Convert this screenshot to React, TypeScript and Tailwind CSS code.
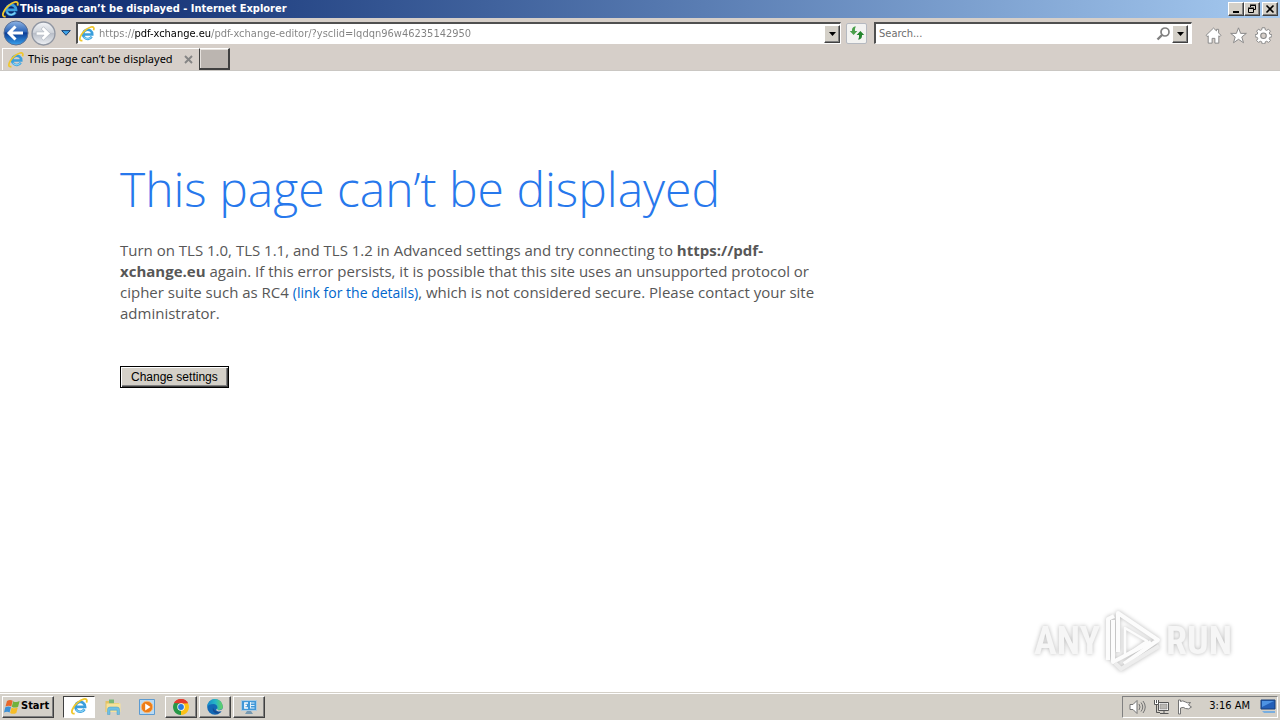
import React from "react";

const raised =
  "border border-t-white border-l-white border-r-[#404040] border-b-[#404040] bg-[#d4d0c8] shadow-[inset_-1px_-1px_0_#808080]";

function IeLogo({ className }: { className: string }) {
  return (
    <svg viewBox="0 0 16 16" className={className} aria-hidden="true">
      <path d="M12.700 10.600a4.600 4.600 0 1 1 .6-2.200H4.600" fill="none" stroke="#3a9edc" strokeWidth="2.500" />
      <path d="M12.300 11a4.600 4.600 0 0 1-7.600-.2" fill="none" stroke="#86d5f7" strokeWidth="1.100" />
      <path
        d="M3.400 14.400C.4 15.600.2 12.600 2 9.400 4 5.600 8.500 1.800 12 1c2.900-.6 3.400 1.100 2.500 3.300"
        fill="none"
        stroke="#efc62c"
        strokeWidth="1.700"
      />
    </svg>
  );
}

function ArrowDown() {
  return (
    <svg viewBox="0 0 7 4" className="h-1 w-[7px]" aria-hidden="true">
      <path d="M0 0h7L3.500 4z" fill="#000" />
    </svg>
  );
}

function TitleBar() {
  return (
    <header className="flex h-[18px] items-center bg-linear-to-r from-[#0a246a] to-[#a6caf0] pr-0.5 pl-0.5">
      <IeLogo className="size-[17px]" />
      <h2 className="ml-px flex-1 font-['DejaVu_Sans_Condensed','DejaVu_Sans',sans-serif] text-[11px] leading-4 font-bold text-white">
        This page can’t be displayed - Internet Explorer
      </h2>
      <button aria-label="Minimize" className={`flex h-3.5 w-4 items-center justify-center ${raised}`}>
        <svg viewBox="0 0 12 10" className="h-2.5 w-3" aria-hidden="true">
          <path d="M3 7h6v2H3z" />
        </svg>
      </button>
      <button aria-label="Restore" className={`flex h-3.5 w-4 items-center justify-center ${raised}`}>
        <svg viewBox="0 0 12 10" className="h-2.5 w-3" aria-hidden="true">
          <path d="M4.500 3V1.500h5v4H8M4 1h6" fill="none" stroke="#000" />
          <path d="M2.500 4.500h5v4h-5zM2 4h6" fill="none" stroke="#000" />
        </svg>
      </button>
      <button aria-label="Close" className={`ml-0.5 flex h-3.5 w-4 items-center justify-center ${raised}`}>
        <svg viewBox="0 0 12 10" className="h-2.5 w-3" aria-hidden="true">
          <path d="M2.500 1.500l7 7m0-7l-7 7" stroke="#000" strokeWidth="1.600" />
        </svg>
      </button>
    </header>
  );
}

function NavRow() {
  return (
    <nav className="flex h-[30px] items-center pr-2 pl-[3px]">
      <button aria-label="Back" className="size-[26px]">
        <svg viewBox="0 0 26 26" className="size-[26px]" aria-hidden="true">
          <defs>
            <linearGradient id="back" x2="0" y2="1">
              <stop offset="0" stopColor="#8fb4e4" />
              <stop offset=".45" stopColor="#2b64b8" />
              <stop offset=".5" stopColor="#0b3b94" />
              <stop offset="1" stopColor="#39a2ee" />
            </linearGradient>
          </defs>
          <circle cx="13" cy="13" r="12" fill="url(#back)" stroke="#5a6f94" />
          <path d="M12.500 6.500L6 13l6.500 6.500M6.500 13H20" fill="none" stroke="#fff" strokeWidth="3" />
        </svg>
      </button>
      <button aria-label="Forward" className="ml-0.5 size-[25px]">
        <svg viewBox="0 0 24 24" className="size-[25px]" aria-hidden="true">
          <defs>
            <linearGradient id="forward" x2="0" y2="1">
              <stop offset="0" stopColor="#f4f6f9" />
              <stop offset=".45" stopColor="#cfd3da" />
              <stop offset=".5" stopColor="#b9bec8" />
              <stop offset="1" stopColor="#eef1f5" />
            </linearGradient>
          </defs>
          <circle cx="12" cy="12" r="11" fill="url(#forward)" stroke="#9096a2" strokeWidth="1.300" />
          <path
            d="M12 5.500L18.500 12 12 18.500l-2.200-2.200 2.700-2.700H5v-3.200h7.500L9.800 7.700z"
            fill="#fff"
            stroke="#aeb4be"
            strokeWidth=".7"
          />
        </svg>
      </button>
      <button aria-label="Recent pages" className="ml-1 flex h-5 w-3 items-center justify-center">
        <svg viewBox="0 0 10 6" className="h-1.5 w-2.5" aria-hidden="true">
          <path d="M.7.600h8.600L5 5.300z" fill="#3fa4e8" stroke="#173f72" />
        </svg>
      </button>
      <div className="ml-1 flex h-[22px] flex-1 items-center border-t-2 border-r border-b border-l-2 border-t-[#505050] border-r-white border-b-white border-l-[#505050] bg-white">
        <IeLogo className="ml-px size-4" />
        <input
          aria-label="Address"
          defaultValue="https://pdf-xchange.eu/pdf-xchange-editor/?ysclid=lqdqn96w46235142950"
          className="ml-1 h-[18px] min-w-0 flex-1 bg-[linear-gradient(90deg,#808080_36px,#000_36px,#000_112px,#808080_112px)] bg-clip-text font-['DejaVu_Sans_Condensed','DejaVu_Sans',sans-serif] text-[11px] text-transparent outline-none"
        />
        <button aria-label="Show address list" className={`flex h-[18px] w-4 items-center justify-center ${raised}`}>
          <ArrowDown />
        </button>
      </div>
      <button
        aria-label="Refresh"
        className="ml-[5px] flex size-[21px] items-center justify-center rounded-xs border border-[#b5b9c0] bg-[#f3f3f1]"
      >
        <svg viewBox="0 0 16 14" className="h-3.5 w-4" aria-hidden="true">
          <path d="M7 .5C3.800.500 3 2.200 3 5H.8L4.600 9l3.800-4H6C5.800 3 6 1.700 7 .5z" fill="#4aa04a" />
          <path d="M9 13.500c3.200 0 4-1.700 4-4.500h2.200l-3.800-4-3.800 4H10c.2 2 0 3.300-1 4.500z" fill="#23852c" />
        </svg>
      </button>
      <div className="ml-[7px] flex h-[22px] w-[318px] items-center border-t-2 border-r border-b border-l-2 border-t-[#505050] border-r-white border-b-white border-l-[#505050] bg-white pr-[3px]">
        <input
          aria-label="Search"
          placeholder="Search..."
          className="ml-[3px] h-[18px] min-w-0 flex-1 font-['DejaVu_Sans_Condensed','DejaVu_Sans',sans-serif] text-[11px] placeholder-[#6d6d6d] outline-none"
        />
        <button aria-label="Start search" className="mr-px">
          <svg viewBox="0 0 15 14" className="h-3.5 w-[15px]" aria-hidden="true">
            <circle cx="9" cy="5" r="4" fill="none" stroke="#808080" strokeWidth="1.700" />
            <path d="M6 8l-4.500 4.500" stroke="#808080" strokeWidth="2.400" />
          </svg>
        </button>
        <button aria-label="Search options" className={`flex h-[18px] w-4 items-center justify-center ${raised}`}>
          <ArrowDown />
        </button>
      </div>
      <div className="ml-[13px] flex items-center gap-2 pt-1">
        <button aria-label="Home">
          <svg viewBox="0 0 16 16" className="size-[17px]" aria-hidden="true">
            <path
              d="M8 1L1 7.800l1 1.200 1-.7v6.900h3.700v-4.500h2.600v4.500H13V8.300l1 .7 1-1.200-2.200-2.200V2.200h-2v1.500z"
              fill="#fff"
              stroke="#858585"
              strokeWidth=".9"
            />
          </svg>
        </button>
        <button aria-label="Favorites">
          <svg viewBox="0 0 16 16" className="size-[17px]" aria-hidden="true">
            <path
              d="M8 .8l2 5.200h5.400l-4.300 3.400 1.600 5.400L8 11.600l-4.700 3.200 1.600-5.400L.6 6H6z"
              fill="#fff"
              stroke="#858585"
              strokeWidth=".9"
            />
          </svg>
        </button>
        <button aria-label="Tools">
          <svg viewBox="0 0 16 16" className="size-[17px]" aria-hidden="true">
            <path
              d="M6.700.700h2.600l.4 2 1.300.5 1.700-1.100 1.800 1.800-1.100 1.700.5 1.200 1.900.4v2.100l-1.900.4-.5 1.300 1.100 1.700-1.800 1.800-1.700-1.100-1.300.5-.4 1.900H6.700l-.4-1.900-1.300-.5-1.700 1.100-1.800-1.800 1.100-1.700-.5-1.300-1.900-.4V7.200l1.900-.4.5-1.200-1.100-1.700 1.800-1.800L5 3.200l1.300-.5z"
              fill="#fff"
              stroke="#858585"
              strokeWidth=".9"
            />
            <circle cx="8" cy="8.200" r="2.600" fill="#d6cfc9" stroke="#858585" />
          </svg>
        </button>
      </div>
    </nav>
  );
}

function TabRow() {
  return (
    <div className="flex h-[23px] border-b border-[#cac7c3]">
      <div className="ml-0.5 flex w-[197px] items-center border-t border-l border-white pr-1.5 pl-[5px]">
        <IeLogo className="size-4" />
        <span className="ml-1 flex-1 font-['Noto_Sans','DejaVu_Sans_Condensed',sans-serif] text-[11px] whitespace-nowrap">
          This page can’t be displayed
        </span>
        <button aria-label="Close tab">
          <svg viewBox="0 0 9 9" className="size-[9px]" aria-hidden="true">
            <path d="M1 1l7 7m0-7L1 8" stroke="#858585" strokeWidth="1.900" />
          </svg>
        </button>
      </div>
      <button
        aria-label="New tab"
        className="h-[22px] w-[31px] border border-t-white border-r-2 border-b-2 border-[#404040] bg-[#bbb5b0] shadow-[inset_1px_1px_0_#e6e2de]"
      />
    </div>
  );
}

function Watermark() {
  return (
    <div className="flex items-center gap-1 self-end pr-12 pb-[18px] font-['Liberation_Sans_Narrow','Roboto_Condensed','DejaVu_Sans_Condensed',sans-serif] text-[38px] leading-[66px] font-bold text-[#f6f6f6] drop-shadow-[0_0_2px_#b8b8b8]">
      <span>ANY</span>
      <svg viewBox="0 0 58 66" className="h-[66px] w-[58px]" aria-hidden="true">
        <g fill="none" stroke="#fcfcfc" strokeWidth="4" strokeLinejoin="round">
          <path d="M14 44V5l40 27L20 56" />
          <path d="M21 48V20l22 13-22 15" strokeWidth="2.500" />
          <path d="M4 52V11l6-3M9 12v42l38-20" />
          <path d="M11 55l6 6 38-23" stroke="#ededed" />
        </g>
      </svg>
      <span>RUN</span>
    </div>
  );
}

function ErrorPage() {
  return (
    <main className="flex flex-1 flex-col justify-between bg-white font-['Open_Sans','Noto_Sans',sans-serif]">
      <div className="px-[120px] pt-[84px]">
        <h1 className="text-5xl leading-[68px] font-light text-[#2778ec]">This page can’t be displayed</h1>
        <p className="mt-[17px] max-w-[705px] text-[15px] leading-[21px] text-[#575757]">
          Turn on TLS 1.0, TLS 1.1, and TLS 1.2 in Advanced settings and try connecting to{" "}
          <b className="font-bold">https://pdf-xchange.eu</b> again. If this error persists, it is possible that this
          site uses an unsupported protocol or cipher suite such as RC4{" "}
          <a href="#details" className="text-sm leading-[21px] text-[#0066cc]">
            (link for the details)
          </a>
          , which is not considered secure. Please contact your site administrator.
        </p>
        <button className="mt-[42px] h-[22px] border border-black bg-[#d4d0c8] px-2.5 font-['Liberation_Sans',sans-serif] text-xs leading-5 text-black shadow-[inset_1px_1px_0_#fff,inset_-1px_-1px_0_#404040,inset_-2px_-2px_0_#808080]">
          Change settings
        </button>
      </div>
      <Watermark />
    </main>
  );
}

const task = "flex h-[22px] w-8 items-center justify-center";

function Taskbar() {
  return (
    <footer className="flex h-[28px] items-center border-t border-[#d4d0c8] bg-[#d4d0c8] pr-0.5 shadow-[inset_0_1px_0_#fff]">
      <button
        className={`ml-0.5 flex h-[22px] w-[52px] items-center gap-px pl-px font-['DejaVu_Sans_Condensed','DejaVu_Sans',sans-serif] text-[11px] font-bold ${raised}`}
      >
        <svg viewBox="0 0 16 16" className="size-4 shrink-0" aria-hidden="true">
          <path d="M3 2Q6 .1 8.700 1.800L7.300 7.400Q4.700 6 1.500 7.600z" fill="#e8682b" />
          <path d="M9.200 2.200Q12 4 15.600 2l-1.500 5.700Q10.800 9.400 7.800 7.700z" fill="#72b23c" />
          <path d="M1.300 8.300Q4.300 6.800 7 8.100L5.600 13.500Q3.200 12 0 13.600z" fill="#3d91d6" />
          <path d="M7.600 8.400q3 1.700 6.200.100L12.300 14Q9 15.700 6.100 14z" fill="#f6bd27" />
        </svg>
        Start
      </button>
      <button
        aria-label="Internet Explorer"
        className="ml-[9px] flex h-[22px] w-8 items-center justify-center border border-t-[#404040] border-r-white border-b-white border-l-[#404040] bg-white"
      >
        <IeLogo className="size-[17px]" />
      </button>
      <button aria-label="File Explorer" className={`ml-0.5 ${task}`}>
        <svg viewBox="0 0 18 18" className="size-[18px]" aria-hidden="true">
          <path d="M1.500 3h5l1 2H15v9H1.500z" fill="#e3c263" />
          <path d="M5 1.500h5v4H5z" fill="#79b878" />
          <path d="M2.500 5.500h14V14h-14z" fill="#f6e29a" />
          <path d="M3.500 16.500v-5q0-2.500 2.500-2.500h7q2.500 0 2.500 2.500v5H13v-4.300H6v4.300z" fill="#6ec0e4" stroke="#4f9dc4" strokeWidth=".5" />
        </svg>
      </button>
      <button aria-label="Media Player" className={`ml-0.5 ${task}`}>
        <svg viewBox="0 0 16 16" className="size-4" aria-hidden="true">
          <path d="M.5.500h15v15H.5z" fill="#b9daf3" stroke="#5c9bd1" />
          <circle cx="8" cy="8" r="5.800" fill="#ed7d17" stroke="#f7b977" />
          <path d="M6.200 4.500L11.500 8l-5.300 3.500z" fill="#fff" />
        </svg>
      </button>
      <button aria-label="Chrome" className={`ml-0.5 ${task} ${raised}`}>
        <svg viewBox="0 0 16 16" className="size-4" aria-hidden="true">
          <path d="M8 8L1.100 4A8 8 0 0 1 14.900 4z" fill="#e33b2e" />
          <path d="M8 8l6.900-4A8 8 0 0 1 8 16z" fill="#fbc116" />
          <path d="M8 8v8A8 8 0 0 1 1.100 4z" fill="#279847" />
          <path d="M8 4.300h7l-3.800 5.500z" fill="#fbc116" />
          <path d="M4.800 10L1.100 4 8 4.300z" fill="#279847" />
          <path d="M1.100 4L8 4.300h7A8 8 0 0 0 1.100 4z" fill="#e33b2e" />
          <circle cx="8" cy="8" r="3.700" fill="#fff" />
          <circle cx="8" cy="8" r="2.900" fill="#287be0" />
        </svg>
      </button>
      <button aria-label="Edge" className={`ml-0.5 ${task} ${raised}`}>
        <svg viewBox="0 0 16 16" className="size-4" aria-hidden="true">
          <defs>
            <linearGradient id="edge" x2="1" y2="0">
              <stop offset="0" stopColor="#168acd" />
              <stop offset=".55" stopColor="#28b8c4" />
              <stop offset="1" stopColor="#67d35b" />
            </linearGradient>
          </defs>
          <circle cx="8" cy="8" r="7.800" fill="#1268b5" />
          <path
            d="M.2 8A7.800 7.800 0 0 1 15.800 7.500c.2 2.600-2 3.700-4.300 3.500-1.700-.1-2-.8-1.200-1.700C10.900 7 9 5 6.500 5 3.500 5 1 6 .2 8z"
            fill="url(#edge)"
          />
          <path d="M9.800 9.800C8 12 11.500 13.500 15 12l1 .5V9.500c-1.200 1.500-3.300 2-5 1.500z" fill="#d4d0c8" />
          <path d="M6 8.500c-1 3 1 6 4.500 6.300A7 7 0 0 0 14 12.600c-3.500 1-7-.6-8-4.100z" fill="#164c93" />
        </svg>
      </button>
      <button aria-label="Remote tools" className={`ml-0.5 ${task} ${raised}`}>
        <svg viewBox="0 0 18 16" className="h-4 w-[18px]" aria-hidden="true">
          <path d="M1.500 1.500h15v10h-15z" fill="#4197d7" stroke="#a9cbe3" />
          <path d="M8 4H4.800v5H8M5 6.500h2" fill="none" stroke="#fff" strokeWidth="1.300" />
          <path d="M10 4h4.500M10 6.500h4.500M10 9h4.500M10.500 3v6" fill="none" stroke="#dff0fb" />
          <path d="M7 12h4l2 3H5z" fill="#7799b1" />
        </svg>
      </button>
      <div className="ml-auto flex h-[22px] items-center border border-t-[#808080] border-r-white border-b-white border-l-[#808080] pr-px pl-1.5">
        <svg viewBox="0 0 17 16" className="h-4 w-[17px]" fill="none" stroke="#737373" aria-label="Volume">
          <path d="M1 5.500h3l4-4v13l-4-4H1z" fill="#fff" />
          <path d="M10 5q2 3 0 6M12 3.500q3.500 4.500 0 9M14 2q4.500 6 0 12" />
        </svg>
        <svg viewBox="0 0 17 16" className="ml-[7px] h-4 w-[17px]" fill="none" stroke="#555" aria-label="Network">
          <path d="M5.500 3.500h10v8h-10z" fill="#fff" />
          <path d="M7 5h7v5H7z" fill="#b9b7b3" stroke="#888" strokeWidth=".6" />
          <path d="M7 14.500h8.500M11 12v2M3.500 5.500v8H7" />
          <path d="M1.500 1v4.500h4V1M3.500 1v3" fill="#fff" />
        </svg>
        <svg viewBox="0 0 16 16" className="ml-[7px] size-4" fill="#fff" stroke="#737373" aria-label="Action Center">
          <path d="M1.500 1v14h2V9q3-1.500 5 .5 3 1.500 6-1.500l-3-2 2-2.500q-3 1-5-.5-3-2-5-.5V1z" />
        </svg>
        <time className="ml-4 font-['DejaVu_Sans_Condensed','DejaVu_Sans',sans-serif] text-[11px]">3:16 AM</time>
        <svg viewBox="0 0 16 15" className="ml-2.5 h-[15px] w-4" aria-label="Show desktop">
          <path d="M1 1h14v9H1z" fill="#235fb8" stroke="#173e7b" />
          <path d="M2 2h12L2 8z" fill="#4d93e3" />
          <path d="M2 12h13v2H4z" fill="#78aee0" />
        </svg>
      </div>
    </footer>
  );
}

export default function App() {
  return (
    <div className="flex min-h-screen flex-col bg-[#d6cfc9] text-black">
      <TitleBar />
      <NavRow />
      <TabRow />
      <ErrorPage />
      <Taskbar />
    </div>
  );
}
